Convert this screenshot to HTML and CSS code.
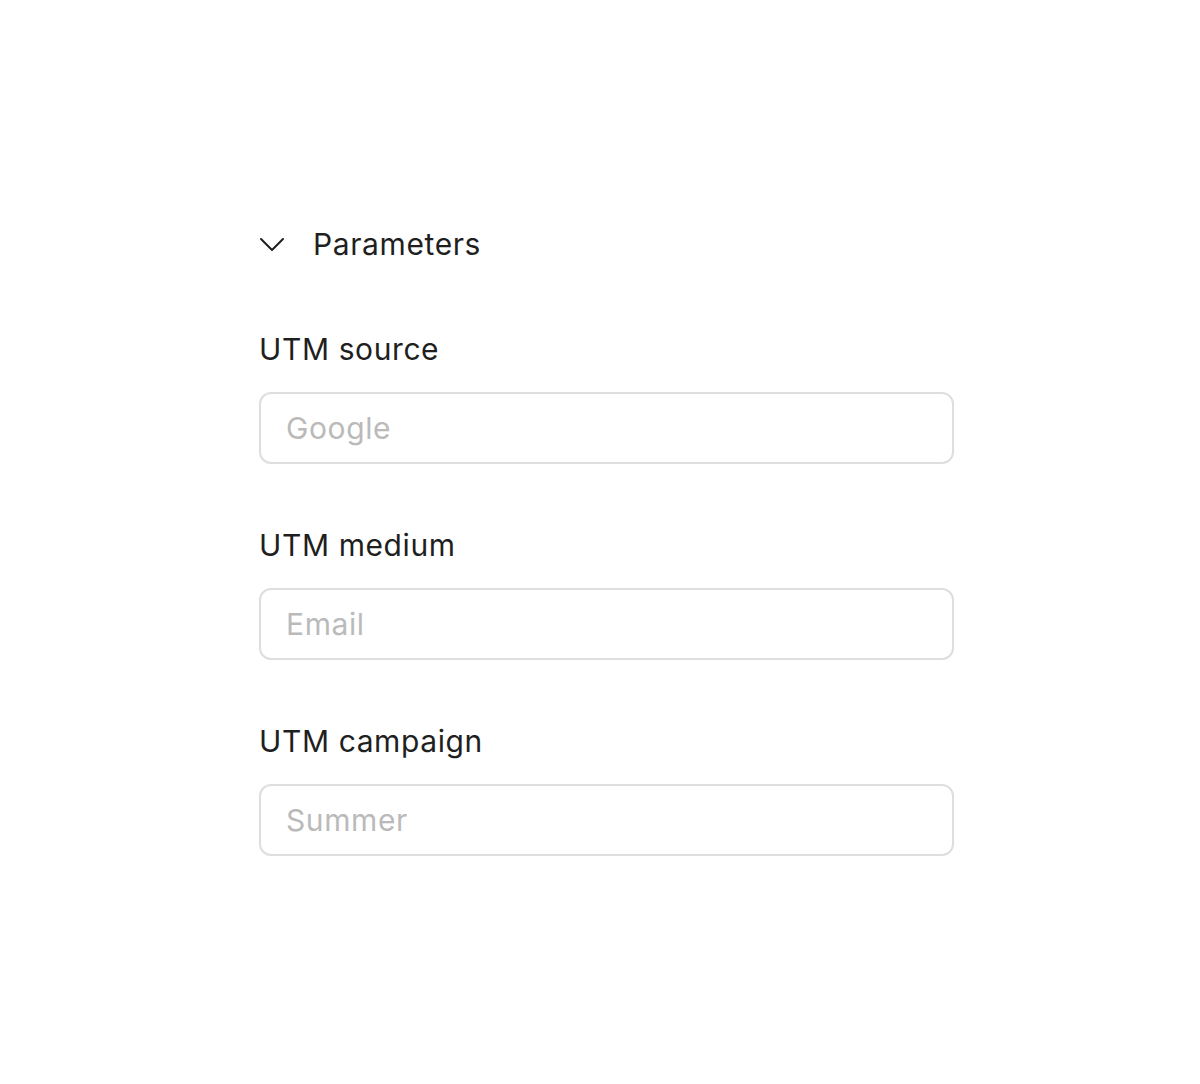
FILE: index.html
```html
<!DOCTYPE html>
<html lang="en">
<head>
    <meta charset="UTF-8">
    <meta name="viewport" content="width=device-width, initial-scale=1.0">
    <title>Parameters</title>
    <link rel="stylesheet" href="styles.css">
</head>
<body>
    <div class="panel">
        <div class="section-head">
            <svg class="chevron" width="26" height="18" viewBox="0 0 26 18">
                <path d="M2 4 L13 15 L24 4" fill="none" stroke="#1f1f1f" stroke-width="2" stroke-linecap="round" stroke-linejoin="round"/>
            </svg>
            <span class="section-title">Parameters</span>
        </div>

        <div class="field">
            <label for="utm-source">UTM source</label>
            <input type="text" id="utm-source" placeholder="Google">
        </div>
        <div class="field">
            <label for="utm-medium">UTM medium</label>
            <input type="text" id="utm-medium" placeholder="Email">
        </div>
        <div class="field">
            <label for="utm-campaign">UTM campaign</label>
            <input type="text" id="utm-campaign" placeholder="Summer">
        </div>
    </div>
</body>
</html>
```

FILE: styles.css
```css
body {
    margin: 0;
    background: #fff;
    font-family: Inter, "Noto Sans", sans-serif;
    color: #1f1f1f;
}
.panel {
    width: 695px;
    margin-left: 259px;
    padding-top: 226px;
}
.section-head {
    display: flex;
    align-items: center;
    height: 36px;
    margin-bottom: 69px;
}
.chevron {
    margin-right: 28px;
}
.section-title {
    font-size: 30px;
    line-height: 36px;
    letter-spacing: 0.6px;
}
.field {
    display: flex;
    flex-direction: column;
    margin-bottom: 63px;
}
.field label {
    font-size: 30px;
    line-height: 36px;
    letter-spacing: 0.6px;
    margin-bottom: 25px;
}
.field input {
    box-sizing: border-box;
    height: 72px;
    border: 2px solid #dedede;
    border-radius: 12px;
    padding: 0 25px;
    font-family: inherit;
    font-size: 30px;
    letter-spacing: 0.6px;
    color: #1f1f1f;
    outline: none;
}
.field input::placeholder {
    color: #bababa;
}
```
